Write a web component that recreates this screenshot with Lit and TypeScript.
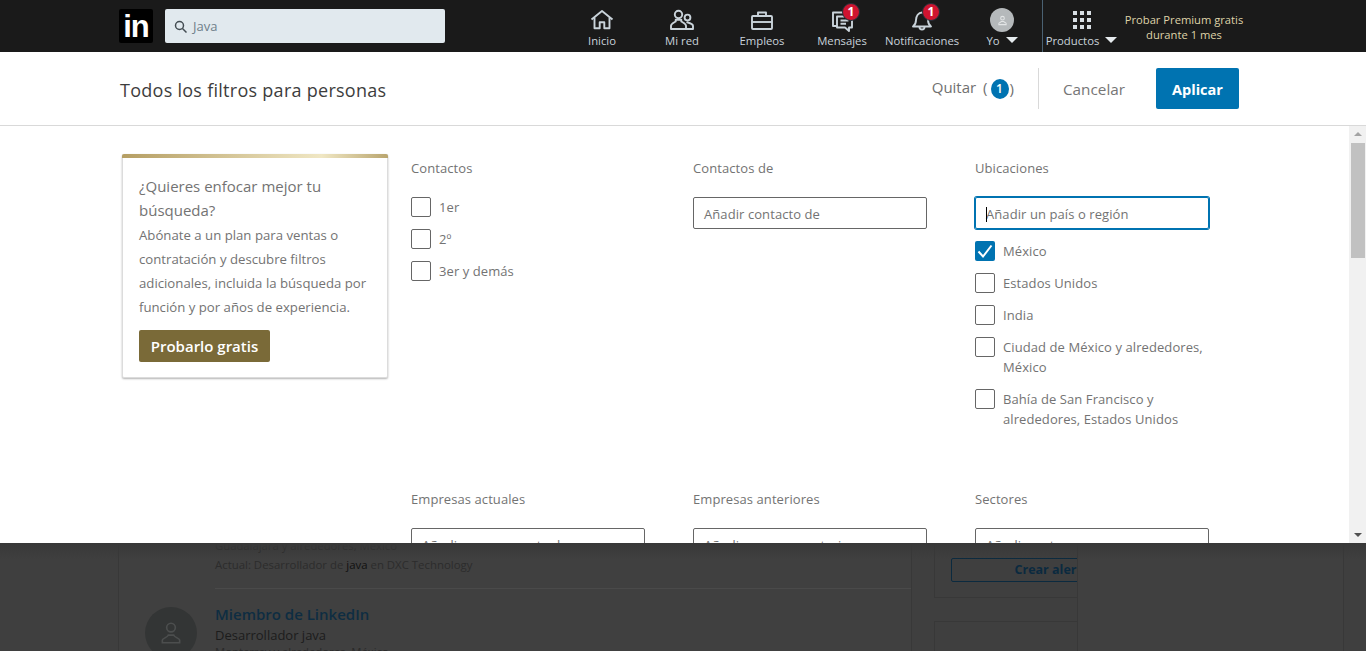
import { LitElement, html, css, svg } from 'lit';
import { customElement } from 'lit/decorators.js';

const navItems = [
  {
    label: 'Inicio',
    icon: svg`<path d="M1.500 11.500 12 3l10.500 8.500"/><path d="M4.500 9.500v10.800h5.200v-6h4.600v6h5.200V9.500"/>`,
  },
  {
    label: 'Mi red',
    icon: svg`<circle cx="8.500" cy="6.500" r="3.700"/><path d="M1 21v-3.200c0-2.200 3-3.200 4.700-4.300v-1.800h5.600v1.800c1.700 1.100 4.700 2.100 4.700 4.300V21z"/><circle cx="17.500" cy="9.500" r="2.900"/><path d="M16.500 14c2 .8 6.500 1.500 6.500 4v3h-7"/>`,
  },
  {
    label: 'Empleos',
    icon: svg`<rect x="2" y="8" width="20" height="13" rx="1"/><path d="M8 8V4.500h8V8"/><path d="M2 14h20"/>`,
  },
  {
    label: 'Mensajes',
    badge: true,
    icon: svg`<path d="M7 18H3V4.500h13.500V8"/><path d="M7 8.500h15v11h-3v3.500l-4-3.500H7z"/><path d="M10.500 12.500h8M10.500 15.800h5.500"/>`,
  },
  {
    label: 'Notificaciones',
    badge: true,
    icon: svg`<path d="M3 18.500c2-1.500 3-3 3-6.500 0-4 2.500-7.500 6-7.500s6 3.500 6 7.500c0 3.500 1 5 3 6.500z"/><path d="M9.500 19a2.500 2.500 0 0 0 5 0"/>`,
  },
];

const filters = [
  { title: 'Contactos', checks: [{ text: '1er' }, { text: '2º' }, { text: '3er y demás' }] },
  { title: 'Contactos de', placeholder: 'Añadir contacto de' },
  {
    title: 'Ubicaciones',
    placeholder: 'Añadir un país o región',
    focused: true,
    checks: [
      { text: 'México', checked: true },
      { text: 'Estados Unidos' },
      { text: 'India' },
      { text: 'Ciudad de México y alrededores, México' },
      { text: 'Bahía de San Francisco y alrededores, Estados Unidos' },
    ],
  },
  { title: 'Empresas actuales', placeholder: 'Añadir empresa actual' },
  { title: 'Empresas anteriores', placeholder: 'Añadir empresa anterior' },
  { title: 'Sectores', placeholder: 'Añadir sector' },
];

const personIcon = svg`<circle cx="12" cy="7" r="4"/><path d="M4 21v-2.500c0-1.500 5-2.500 5.500-4.500h5c.5 2 5.500 3 5.500 4.500V21z"/>`;

@customElement('app-root')
export class AppRoot extends LitElement {
  static styles = css`
    :host {
      display: block;
      height: 651px;
      overflow: hidden;
      font-family: 'Open Sans', 'Noto Sans', sans-serif;
    }

    /* top bar */
    .topbar {
      display: flex;
      align-items: stretch;
      height: 52px;
      background: #1a1a1a;
      padding-left: 119px;
    }
    .logo {
      width: 34px;
      height: 34px;
      margin-top: 9px;
      background: #000;
      border-radius: 2px;
      color: #fff;
      font: bold 31px/35px 'Liberation Sans', sans-serif;
      letter-spacing: -1px;
      text-align: center;
    }
    .search {
      display: flex;
      align-items: center;
      gap: 6px;
      width: 280px;
      height: 34px;
      margin: 9px 0 0 12px;
      padding-left: 9px;
      box-sizing: border-box;
      background: #e1e9ee;
      border-radius: 2px;
      color: #6f7f8a;
      font-size: 13px;
    }
    .search svg {
      width: 13px;
      height: 13px;
      fill: none;
      stroke: #434c52;
      stroke-width: 1.500;
    }
    .nav {
      display: flex;
      margin-left: 117px;
    }
    .nav-item {
      position: relative;
      width: 80px;
      display: flex;
      flex-direction: column;
      align-items: center;
      color: #c9d3da;
      font-size: 11.300px;
      line-height: 16px;
      white-space: nowrap;
    }
    .nav-icon {
      width: 24px;
      height: 24px;
      margin: 8px 0 1px;
      fill: none;
      stroke: #c9d3da;
      stroke-width: 1.900;
      stroke-linejoin: round;
    }
    .badge {
      position: absolute;
      top: 3px;
      left: 40px;
      width: 16px;
      height: 16px;
      box-sizing: content-box;
      border: 1px solid #24313a;
      border-radius: 50%;
      background: #cf1430;
      color: #fff;
      font-size: 12px;
      font-weight: 700;
      line-height: 16px;
      text-align: center;
    }
    .avatar {
      width: 24px;
      height: 24px;
      margin: 8px 0 1px;
      border-radius: 50%;
      background: #b5b9bb;
      display: flex;
      align-items: center;
      justify-content: center;
    }
    .avatar svg {
      width: 11px;
      height: 11px;
      fill: none;
      stroke: #e3e5e6;
      stroke-width: 2.200;
    }
    .caret {
      display: inline-block;
      width: 0;
      height: 0;
      margin: 0 0 2px 6px;
      border-left: 6px solid transparent;
      border-right: 6px solid transparent;
      border-top: 6px solid #e6ebee;
    }
    .products {
      width: 77px;
      border-left: 1px solid #4a6172;
    }
    .grid-icon {
      display: grid;
      grid-template-columns: repeat(3, 4px);
      grid-auto-rows: 4px;
      gap: 3px;
      margin: 11px 0 4px;
    }
    .grid-icon i {
      background: #d8dfe4;
    }
    .premium {
      width: 128px;
      margin-top: 12px;
      text-align: center;
      color: #dfd3a8;
      font-size: 11.200px;
      line-height: 15px;
      white-space: nowrap;
    }

    /* filter dialog */
    .modal {
      position: relative;
      z-index: 1;
      height: 491px;
      background: #fff;
      display: flex;
      flex-direction: column;
    }
    .modal-head {
      flex: none;
      height: 74px;
      box-sizing: border-box;
      display: flex;
      align-items: center;
      padding: 0 127px 0 120px;
      border-bottom: 1px solid #d9d9d9;
    }
    h1 {
      margin: 2px 0 0;
      font-size: 18px;
      font-weight: 400;
      color: #3d3d3d;
      letter-spacing: 0.270px;
    }
    .clear {
      margin-left: auto;
      display: flex;
      align-items: center;
      color: #707070;
      font-size: 15px;
    }
    .clear-label {
      margin-bottom: 3px;
      white-space: pre;
      word-spacing: 3px;
    }
    .paren {
      margin: 0 0 1px 1px;
    }
    .count {
      width: 18px;
      height: 20px;
      margin-left: 3px;
      border-radius: 50%;
      background: #0073b1;
      color: #fff;
      font-size: 12px;
      font-weight: 600;
      line-height: 20px;
      text-align: center;
    }
    .sep {
      width: 1px;
      height: 41px;
      margin: 0 24px;
      background: #d9d9d9;
    }
    .cancel {
      color: #767676;
      font-size: 15.300px;
      font-weight: 500;
    }
    .apply {
      width: 83px;
      height: 41px;
      margin-left: 31px;
      border-radius: 2px;
      background: #0073b1;
      color: #fff;
      font-size: 14.500px;
      font-weight: 700;
      line-height: 43px;
      text-align: center;
    }
    .modal-body {
      flex: 1;
      min-height: 0;
      display: flex;
    }
    .content {
      flex: 1;
      min-width: 0;
      overflow: hidden;
      display: flex;
      align-items: flex-start;
      gap: 23px;
      padding: 28px 0 0 122px;
    }
    .upsell {
      flex: none;
      width: 266px;
      height: 224px;
      box-sizing: border-box;
      padding: 17px 16px 0;
      position: relative;
      border: 1px solid #dcdcdc;
      border-top: 0;
      border-radius: 2px;
      box-shadow: 0 1px 2px rgba(0, 0, 0, 0.3);
      color: #737373;
      background: #fff;
    }
    .upsell::before {
      content: '';
      position: absolute;
      top: 0;
      left: -1px;
      right: -1px;
      height: 4px;
      border-radius: 2px 2px 0 0;
      background: linear-gradient(90deg, #b59e63, #f0e7c4 75%, #b9a56e);
    }
    .upsell h2 {
      margin: 3px 0 0;
      font-size: 15px;
      font-weight: 400;
      line-height: 24px;
    }
    .upsell p {
      margin: 1px 0 0;
      font-size: 13.200px;
      line-height: 24px;
    }
    .try {
      display: inline-block;
      width: 131px;
      height: 32px;
      margin-top: 11px;
      border-radius: 2px;
      background: #7a6a38;
      color: #fff;
      font-size: 15px;
      font-weight: 600;
      line-height: 33px;
      text-align: center;
    }
    .filters {
      display: grid;
      grid-template-columns: repeat(3, 234px);
      column-gap: 48px;
      row-gap: 48px;
      margin-top: 4px;
      color: #737373;
      font-size: 13px;
      line-height: 20px;
      letter-spacing: 0.080px;
    }
    .title {
      margin-bottom: 19px;
    }
    .input {
      position: relative;
      height: 32px;
      box-sizing: border-box;
      margin-bottom: 12px;
      padding-left: 10px;
      border: 1px solid #666;
      border-radius: 2px;
      line-height: 32px;
      white-space: nowrap;
    }
    .input.focused {
      border-color: #0073b1;
      box-shadow: 0 0 0 1px #0073b1;
    }
    .input.focused::before {
      content: '';
      position: absolute;
      left: 10px;
      top: 9px;
      width: 1px;
      height: 15px;
      background: #000;
    }
    .check {
      display: flex;
      gap: 8px;
      margin-bottom: 12px;
    }
    .box {
      flex: none;
      width: 20px;
      height: 20px;
      box-sizing: border-box;
      border: 1px solid #666;
      border-radius: 2px;
    }
    .box.on {
      border: 0;
      background: #0073b1;
    }
    .box svg {
      display: block;
      width: 20px;
      height: 20px;
      fill: none;
      stroke: #fff;
      stroke-width: 2;
    }
    .scrollbar {
      flex: none;
      width: 17px;
      background: #f1f1f1;
      display: flex;
      flex-direction: column;
      align-items: center;
    }
    .arrow {
      width: 0;
      height: 0;
      border-left: 4px solid transparent;
      border-right: 4px solid transparent;
    }
    .arrow.up {
      margin-top: 6px;
      border-bottom: 4px solid #a3a3a3;
    }
    .arrow.down {
      margin: auto 0 6px;
      border-top: 4px solid #505050;
    }
    .thumb {
      width: 14px;
      height: 115px;
      margin-top: 7px;
      background: #c1c1c1;
    }

    /* page dimmed behind the dialog */
    .under {
      position: relative;
      height: 108px;
      overflow: hidden;
      background: #3f3f3f;
      color: #1c1c1c;
      font-size: 13px;
    }
    .under::before {
      content: '';
      position: absolute;
      inset: 0 0 auto 0;
      height: 16px;
      background: linear-gradient(#383838, transparent);
      z-index: 1;
    }
    .columns {
      display: flex;
      align-items: flex-start;
      padding-left: 118px;
    }
    .results {
      width: 794px;
      height: 108px;
      box-sizing: border-box;
      border: 1px solid #383838;
      border-width: 0 1px;
      background: #404040;
      padding-left: 96px;
    }
    .result {
      position: relative;
      line-height: 20px;
    }
    .result .ava {
      position: absolute;
      left: -70px;
      top: 18px;
      width: 52px;
      height: 52px;
      border-radius: 50%;
      background: #333535;
      display: flex;
      align-items: center;
      justify-content: center;
    }
    .ava svg {
      width: 26px;
      height: 26px;
      fill: none;
      stroke: #4c4e4e;
      stroke-width: 1.500;
    }
    .first {
      height: 52px;
      margin-top: -7px;
      border-bottom: 1px solid #4a4a4a;
    }
    .first .loc {
      height: 19px;
      color: #262626;
      font-size: 11.300px;
    }
    .first .now {
      color: #2c2c2c;
      font-size: 11.400px;
    }
    .first .now b {
      font-weight: 400;
      color: #111;
    }
    .first .ava {
      top: -47px;
    }
    .name {
      padding-top: 14px;
      color: #0e2d42;
      font-size: 15px;
      font-weight: 600;
      line-height: 22px;
    }
    .place {
      margin-top: -3px;
      color: #2a2a2a;
      font-size: 11.300px;
    }
    .side {
      margin-left: 22px;
      width: 408px;
    }
    .side-card {
      height: 55px;
      box-sizing: border-box;
      border: 1px solid #383838;
      border-top: 0;
      padding: 15px 0 0 16px;
    }
    .alert {
      width: 202px;
      height: 24px;
      box-sizing: border-box;
      border: 1px solid #0b2a3f;
      border-radius: 2px;
      color: #0b2a3f;
      font-size: 12.500px;
      font-weight: 700;
      line-height: 22px;
      text-align: center;
      white-space: nowrap;
    }
    .side-card.next {
      height: 40px;
      margin-top: 23px;
      border-top: 1px solid #383838;
    }
    .panel {
      position: absolute;
      left: 1077px;
      top: 0;
      width: 265px;
      height: 108px;
      background: #404040;
      border: 1px solid #383838;
      border-width: 0 1px;
    }
  `;

  renderFilter(f: any) {
    return html`
      <div>
        <div class="title">${f.title}</div>
        ${f.placeholder
          ? html`<div class="input ${f.focused ? 'focused' : ''}">${f.placeholder}</div>`
          : ''}
        ${(f.checks || []).map(
          (c: any) => html`
            <div class="check">
              <span class="box ${c.checked ? 'on' : ''}">
                ${c.checked
                  ? html`<svg viewBox="0 0 20 20"><path d="M3.500 10.500l4.500 5 8.500-11"/></svg>`
                  : ''}
              </span>
              <span>${c.text}</span>
            </div>
          `
        )}
      </div>
    `;
  }

  render() {
    return html`
      <div class="topbar">
        <div class="logo">in</div>
        <div class="search">
          <svg viewBox="0 0 13 13"><circle cx="5.500" cy="5.500" r="4"/><path d="M8.500 8.500 12.500 12.500"/></svg>
          <span>Java</span>
        </div>
        <div class="nav">
          ${navItems.map(
            (n) => html`
              <div class="nav-item">
                <svg class="nav-icon" viewBox="0 0 24 24">${n.icon}</svg>
                ${n.badge ? html`<span class="badge">1</span>` : ''}
                <span>${n.label}</span>
              </div>
            `
          )}
          <div class="nav-item">
            <div class="avatar"><svg viewBox="0 0 24 24">${personIcon}</svg></div>
            <span>Yo<i class="caret"></i></span>
          </div>
          <div class="nav-item products">
            <div class="grid-icon">${[...Array(9)].map(() => html`<i></i>`)}</div>
            <span>Productos<i class="caret"></i></span>
          </div>
          <div class="premium">Probar Premium gratis<br />durante 1 mes</div>
        </div>
      </div>

      <div class="modal">
        <div class="modal-head">
          <h1>Todos los filtros para personas</h1>
          <div class="clear">
            <span class="clear-label">Quitar (</span>
            <span class="count">1</span>
            <span class="paren">)</span>
          </div>
          <div class="sep"></div>
          <div class="cancel">Cancelar</div>
          <div class="apply">Aplicar</div>
        </div>
        <div class="modal-body">
          <div class="content">
            <div class="upsell">
              <h2>¿Quieres enfocar mejor tu búsqueda?</h2>
              <p>Abónate a un plan para ventas o contratación y descubre filtros adicionales, incluida la búsqueda por función y por años de experiencia.</p>
              <span class="try">Probarlo gratis</span>
            </div>
            <div class="filters">${filters.map((f) => this.renderFilter(f))}</div>
          </div>
          <div class="scrollbar">
            <i class="arrow up"></i>
            <div class="thumb"></div>
            <i class="arrow down"></i>
          </div>
        </div>
      </div>

      <div class="under">
        <div class="columns">
          <div class="results">
            <div class="result first">
              <div class="ava"></div>
              <div class="loc">Guadalajara y alrededores, México</div>
              <div class="now">Actual: Desarrollador de <b>java</b> en DXC Technology</div>
            </div>
            <div class="result">
              <div class="ava"><svg viewBox="0 0 24 24">${personIcon}</svg></div>
              <div class="name">Miembro de LinkedIn</div>
              <div>Desarrollador java</div>
              <div class="place">Monterrey y alrededores, México</div>
            </div>
          </div>
          <div class="side">
            <div class="side-card"><div class="alert">Crear alerta</div></div>
            <div class="side-card next"></div>
          </div>
        </div>
        <div class="panel"></div>
      </div>
    `;
  }
}
